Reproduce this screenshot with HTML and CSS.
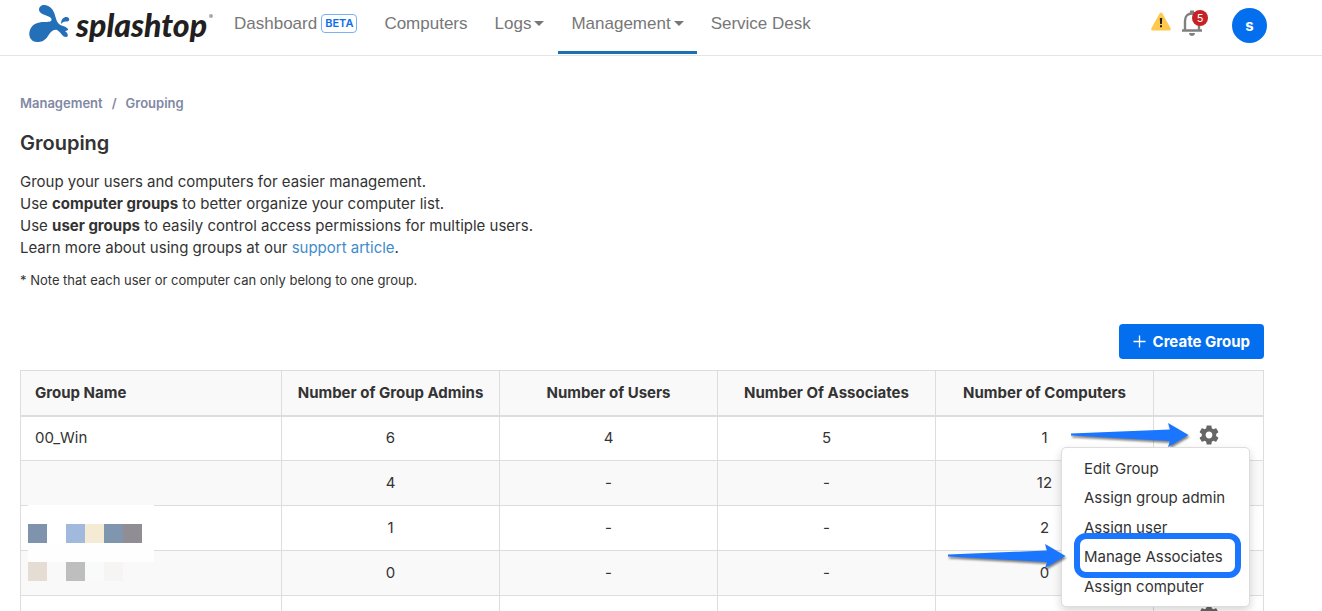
FILE: index.html
```html
<!DOCTYPE html>
<html lang="en">
  <head>
    <meta charset="UTF-8" />
    <meta name="viewport" content="width=device-width, initial-scale=1" />
    <title>Grouping - Splashtop</title>
    <link rel="stylesheet" href="styles.css">
  </head>
  <body>
    <svg width="0" height="0" class="symbols" aria-hidden="true">
      <symbol id="gear" viewBox="2 2 20 20">
        <path fill="#666" d="M19.14 12.94c.04-.3.06-.61.06-.94 0-.32-.02-.64-.07-.94l2.03-1.58c.18-.14.23-.41.12-.61l-1.92-3.32c-.12-.22-.37-.29-.59-.22l-2.39.96c-.5-.38-1.03-.7-1.62-.94l-.36-2.54c-.04-.24-.24-.41-.48-.41h-3.84c-.24 0-.43.17-.47.41l-.36 2.54c-.59.24-1.13.57-1.62.94l-2.39-.96c-.22-.08-.47 0-.59.22L2.74 8.87c-.12.21-.08.47.12.61l2.03 1.58c-.05.3-.09.63-.09.94s.02.64.07.94l-2.03 1.58c-.18.14-.23.41-.12.61l1.92 3.32c.12.22.37.29.59.22l2.39-.96c.5.38 1.03.7 1.62.94l.36 2.54c.05.24.24.41.48.41h3.84c.24 0 .44-.17.47-.41l.36-2.54c.59-.24 1.13-.56 1.62-.94l2.39.96c.22.08.47 0 .59-.22l1.92-3.32c.12-.22.07-.47-.12-.61l-2.01-1.58zM12 15.4c-1.88 0-3.4-1.52-3.4-3.4s1.52-3.4 3.4-3.4 3.4 1.52 3.4 3.4-1.52 3.4-3.4 3.4z"/>
      </symbol>
      <symbol id="arrow" viewBox="0 0 120 26">
        <path fill="#1a75ff" d="M1 10.500 L100 6.500 L98 0 L118.500 12 L98 24 L100 18 L1 12.500 Z"/>
      </symbol>
    </svg>

    <header class="topbar">
      <a class="logo" href="#" aria-label="splashtop">
        <svg class="logo-mark" width="42" height="40" viewBox="28 4 42 40">
          <path fill="#2470b8" d="M39 10 C39 4 47 3 52 9 C56 14 55 20 59 24 C61 26 65 26 67 28 C69 29.500 68 31 65 31 C68 33 69 37 66 37 C62 37 61 32 57 30 C53 29 50 33 48 36 C45 41 41 42 37 42 C30 42 28 35 30 30 C32 24 38 22 44 22 C49 22 53 22 51 18 C48 15 40 15 39 10 Z"/>
          <path fill="#2470b8" d="M61 24 C61 19 64 16.500 67 17 C70 18 70 21 67 21.500 C64 21.500 62.500 22 61 24 Z"/>
        </svg>
        <span class="logo-text">splashtop</span>
        <span class="logo-dot"></span>
      </a>
      <nav class="nav">
        <a href="#">Dashboard<span class="beta">BETA</span></a>
        <a href="#">Computers</a>
        <a href="#">Logs<span class="caret"></span></a>
        <a href="#" class="active">Management<span class="caret"></span></a>
        <a href="#">Service Desk</a>
      </nav>
      <div class="tools">
        <svg width="20" height="19" viewBox="0 0 20 19" aria-label="Warning">
          <path fill="#ffc94f" stroke="#ffc94f" stroke-width="3" stroke-linejoin="round" d="M10 2 L18.300 17 H1.700 Z"/>
          <path fill="#222" d="M8.800 6 H11.200 L10.900 12 H9.100 Z M9 13.200 H11 V15.200 H9 Z"/>
        </svg>
        <button class="bell" type="button" aria-label="Notifications">
          <svg width="22" height="26" viewBox="0 0 22 26">
            <path fill="none" stroke="#808080" stroke-width="2.400" d="M1 20.500 H21 M4 20 V11 C4 6 7 3.500 11 3.500 C15 3.500 18 6 18 11 V20"/>
            <path fill="#808080" d="M9 0.500 H13 V4 H9 Z M8 23 H14 C14 27 8 27 8 23 Z"/>
          </svg>
          <span class="count">5</span>
        </button>
        <button class="avatar" type="button">s</button>
      </div>
    </header>

    <main class="content">
      <div class="breadcrumb">
        <a href="#">Management</a><span>/</span><a href="#">Grouping</a>
      </div>
      <h1>Grouping</h1>
      <p class="intro">
        Group your users and computers for easier management.<br>
        Use <b>computer groups</b> to better organize your computer list.<br>
        Use <b>user groups</b> to easily control access permissions for multiple users.<br>
        Learn more about using groups at our <a href="#">support article</a>.
      </p>
      <p class="note">* Note that each user or computer can only belong to one group.</p>

      <div class="actions">
        <button class="create" type="button">
          <svg width="13" height="13" viewBox="0 0 13 13"><path stroke="#fff" stroke-width="1.300" d="M6.500 0.500 V12.500 M0.500 6.500 H12.500"/></svg>
          Create Group
        </button>
      </div>

      <table class="groups">
        <thead>
          <tr>
            <th class="name">Group Name</th>
            <th>Number of Group Admins</th>
            <th>Number of Users</th>
            <th>Number Of Associates</th>
            <th>Number of Computers</th>
            <th class="settings"></th>
          </tr>
        </thead>
        <tbody>
          <tr>
            <td class="name">00_Win</td>
            <td>6</td>
            <td>4</td>
            <td>5</td>
            <td>1</td>
            <td class="settings">
              <button class="gear" type="button" aria-label="Group settings"><svg width="20" height="20"><use href="#gear"/></svg></button>
              <svg class="arrow arrow-gear" width="120" height="26"><use href="#arrow"/></svg>
              <ul class="menu">
                <li><a href="#">Edit Group</a></li>
                <li><a href="#">Assign group admin</a></li>
                <li><a href="#">Assign user</a></li>
                <li class="marked">
                  <a href="#">Manage Associates</a>
                  <svg class="arrow arrow-item" width="120" height="26"><use href="#arrow"/></svg>
                </li>
                <li><a href="#">Assign computer</a></li>
              </ul>
            </td>
          </tr>
          <tr>
            <td class="name"></td>
            <td>4</td>
            <td>-</td>
            <td>-</td>
            <td>12</td>
            <td class="settings"><button class="gear" type="button" aria-label="Group settings"><svg width="20" height="20"><use href="#gear"/></svg></button></td>
          </tr>
          <tr>
            <td class="name">
              <svg class="mosaic" width="126" height="76">
                <path fill="#fff" d="M0 0 H126 V38 H0 Z"/>
                <path fill="#fefefe" d="M0 38 H126 V57 H0 Z"/>
                <path fill="#8093ad" d="M0 19 h19 v19 h-19 Z"/>
                <path fill="#a0b9dc" d="M38 19 h19 v19 h-19 Z"/>
                <path fill="#f5ead4" d="M57 19 h19 v19 h-19 Z"/>
                <path fill="#8096ae" d="M76 19 h19 v19 h-19 Z"/>
                <path fill="#918d94" d="M95 19 h19 v19 h-19 Z"/>
                <path fill="#e5dcd3" d="M0 57 h19 v19 h-19 Z"/>
                <path fill="#bebebe" d="M38 57 h19 v19 h-19 Z"/>
                <path fill="#f9fbfa" d="M57 57 h19 v19 h-19 Z"/>
                <path fill="#f7f5f4" d="M76 57 h19 v19 h-19 Z"/>
              </svg>
            </td>
            <td>1</td>
            <td>-</td>
            <td>-</td>
            <td>2</td>
            <td class="settings"><button class="gear" type="button" aria-label="Group settings"><svg width="20" height="20"><use href="#gear"/></svg></button></td>
          </tr>
          <tr>
            <td class="name"></td>
            <td>0</td>
            <td>-</td>
            <td>-</td>
            <td>0</td>
            <td class="settings"><button class="gear" type="button" aria-label="Group settings"><svg width="20" height="20"><use href="#gear"/></svg></button></td>
          </tr>
          <tr>
            <td class="name"></td>
            <td></td>
            <td></td>
            <td></td>
            <td></td>
            <td class="settings"><button class="gear" type="button" aria-label="Group settings"><svg width="20" height="20"><use href="#gear"/></svg></button></td>
          </tr>
        </tbody>
      </table>
    </main>
  </body>
</html>
```

FILE: styles.css
```css
*,
*::before {
  box-sizing: border-box;
}
body {
  margin: 0;
  height: 100vh;
  overflow: hidden;
  background-color: #fff;
  color: #333;
  font-family: Inter, "Liberation Sans", sans-serif;
  font-size: 15px;
  line-height: 22px;
}
a {
  color: inherit;
  text-decoration: none;
}
button {
  border: none;
  padding: 0;
  background: none;
  font-family: inherit;
  cursor: pointer;
}
svg {
  display: block;
}
.symbols {
  position: absolute;
}

/* top bar */
.topbar {
  display: flex;
  height: 56px;
  padding: 0 55px 0 28px;
  border-bottom: 1px solid #e4e4e4;
}
.logo {
  display: flex;
  align-items: flex-start;
  width: 193px;
  padding-top: 4px;
}
.logo-text {
  margin-left: 6px;
  color: #231f20;
  font-family: Lato, sans-serif;
  font-size: 32px;
  font-weight: 900;
  font-style: italic;
  line-height: 42px;
}
.logo-dot {
  width: 4px;
  height: 4px;
  margin: 10px 0 0 2px;
  border-radius: 50%;
  background-color: #aaa;
}
.nav {
  display: flex;
  gap: 1px;
  color: #777;
  font-family: "Liberation Sans", Arial, sans-serif;
  font-size: 17px;
}
.nav a {
  display: flex;
  align-items: center;
  height: 54px;
  padding: 0 13px 4px;
  border-bottom: 3px solid transparent;
}
.nav a.active {
  border-bottom-color: #1a6fb5;
}
.beta {
  margin-left: 4px;
  padding: 0 3px;
  border: 1px solid #7ab0f5;
  border-radius: 4px;
  color: #0a6eeb;
  font-family: Inter, sans-serif;
  font-size: 11px;
  font-weight: 600;
  line-height: 17px;
}
.caret {
  margin-left: 3px;
  border-top: 5px solid #777;
  border-left: 5px solid transparent;
  border-right: 5px solid transparent;
}
.tools {
  display: flex;
  align-items: flex-start;
  margin-left: auto;
  padding-top: 8px;
}
.tools > svg {
  margin-top: 4px;
}
.bell {
  position: relative;
  margin: 2px 29px 0 10px;
}
.count {
  position: absolute;
  top: 0;
  left: 11px;
  width: 16px;
  border-radius: 50%;
  background-color: #c62226;
  color: #fff;
  font-size: 11px;
  line-height: 16px;
}
.avatar {
  width: 35px;
  height: 35px;
  border-radius: 50%;
  background-color: #046fee;
  color: #fff;
  font-size: 15px;
  font-weight: 700;
}

/* page */
.content {
  padding: 36px 58px 0 20px;
}
.breadcrumb {
  display: flex;
  gap: 9px;
  color: #8088a3;
  font-size: 13px;
  font-weight: 600;
}
h1 {
  margin: 15px 0 14px;
  font-size: 20px;
  font-weight: 600;
  line-height: 28px;
}
p {
  margin: 0;
}
.intro a {
  color: #428bca;
}
.note {
  margin-top: 10px;
  font-size: 13px;
}
.actions {
  display: flex;
  justify-content: flex-end;
  margin: 33px 0 11px;
}
.create {
  display: flex;
  align-items: center;
  gap: 7px;
  height: 35px;
  padding: 0 14px;
  border-radius: 4px;
  background-color: #046fee;
  color: #fff;
  font-size: 15px;
  font-weight: 700;
}

/* table */
.groups {
  width: 100%;
  table-layout: fixed;
  border-collapse: collapse;
}
.groups th,
.groups td {
  height: 45px;
  padding: 0;
  border: 1px solid #ddd;
  text-align: center;
}
.groups th {
  border-bottom-width: 2px;
  background-color: #f9f9f9;
  font-weight: 700;
}
.groups tr:nth-child(even) td {
  background-color: #f9f9f9;
}
.groups .name {
  position: relative;
  width: 21%;
  padding-left: 14px;
  text-align: left;
}
.groups .settings {
  position: relative;
  width: 110px;
  padding-bottom: 7px;
}
.gear {
  display: block;
  margin: 0 auto;
}
.mosaic {
  position: absolute;
  top: -1px;
  left: 7px;
  z-index: 1;
}
.menu {
  position: absolute;
  top: 30px;
  right: 13px;
  z-index: 2;
  display: flex;
  flex-direction: column;
  justify-content: space-between;
  width: 189px;
  height: 160px;
  margin: 0;
  padding: 6px 0 5px;
  border: 1px solid #ddd;
  border-radius: 5px;
  background-color: #fff;
  box-shadow: 0 4px 10px rgba(0, 0, 0, 0.16);
  list-style: none;
  text-align: left;
}
.menu li {
  position: relative;
  padding-left: 22px;
  line-height: 29px;
}
.marked::before {
  content: "";
  position: absolute;
  top: -9px;
  left: 12px;
  width: 167px;
  height: 45px;
  border: 6px solid #1a75ff;
  border-radius: 12px;
}
.marked a {
  position: relative;
}
.arrow {
  position: absolute;
  filter: drop-shadow(1px 2px 1px rgba(0, 0, 0, 0.5));
}
.arrow-gear {
  top: 6px;
  right: 73px;
  z-index: 1;
}
.arrow-item {
  top: 2px;
  left: -115px;
}
```
